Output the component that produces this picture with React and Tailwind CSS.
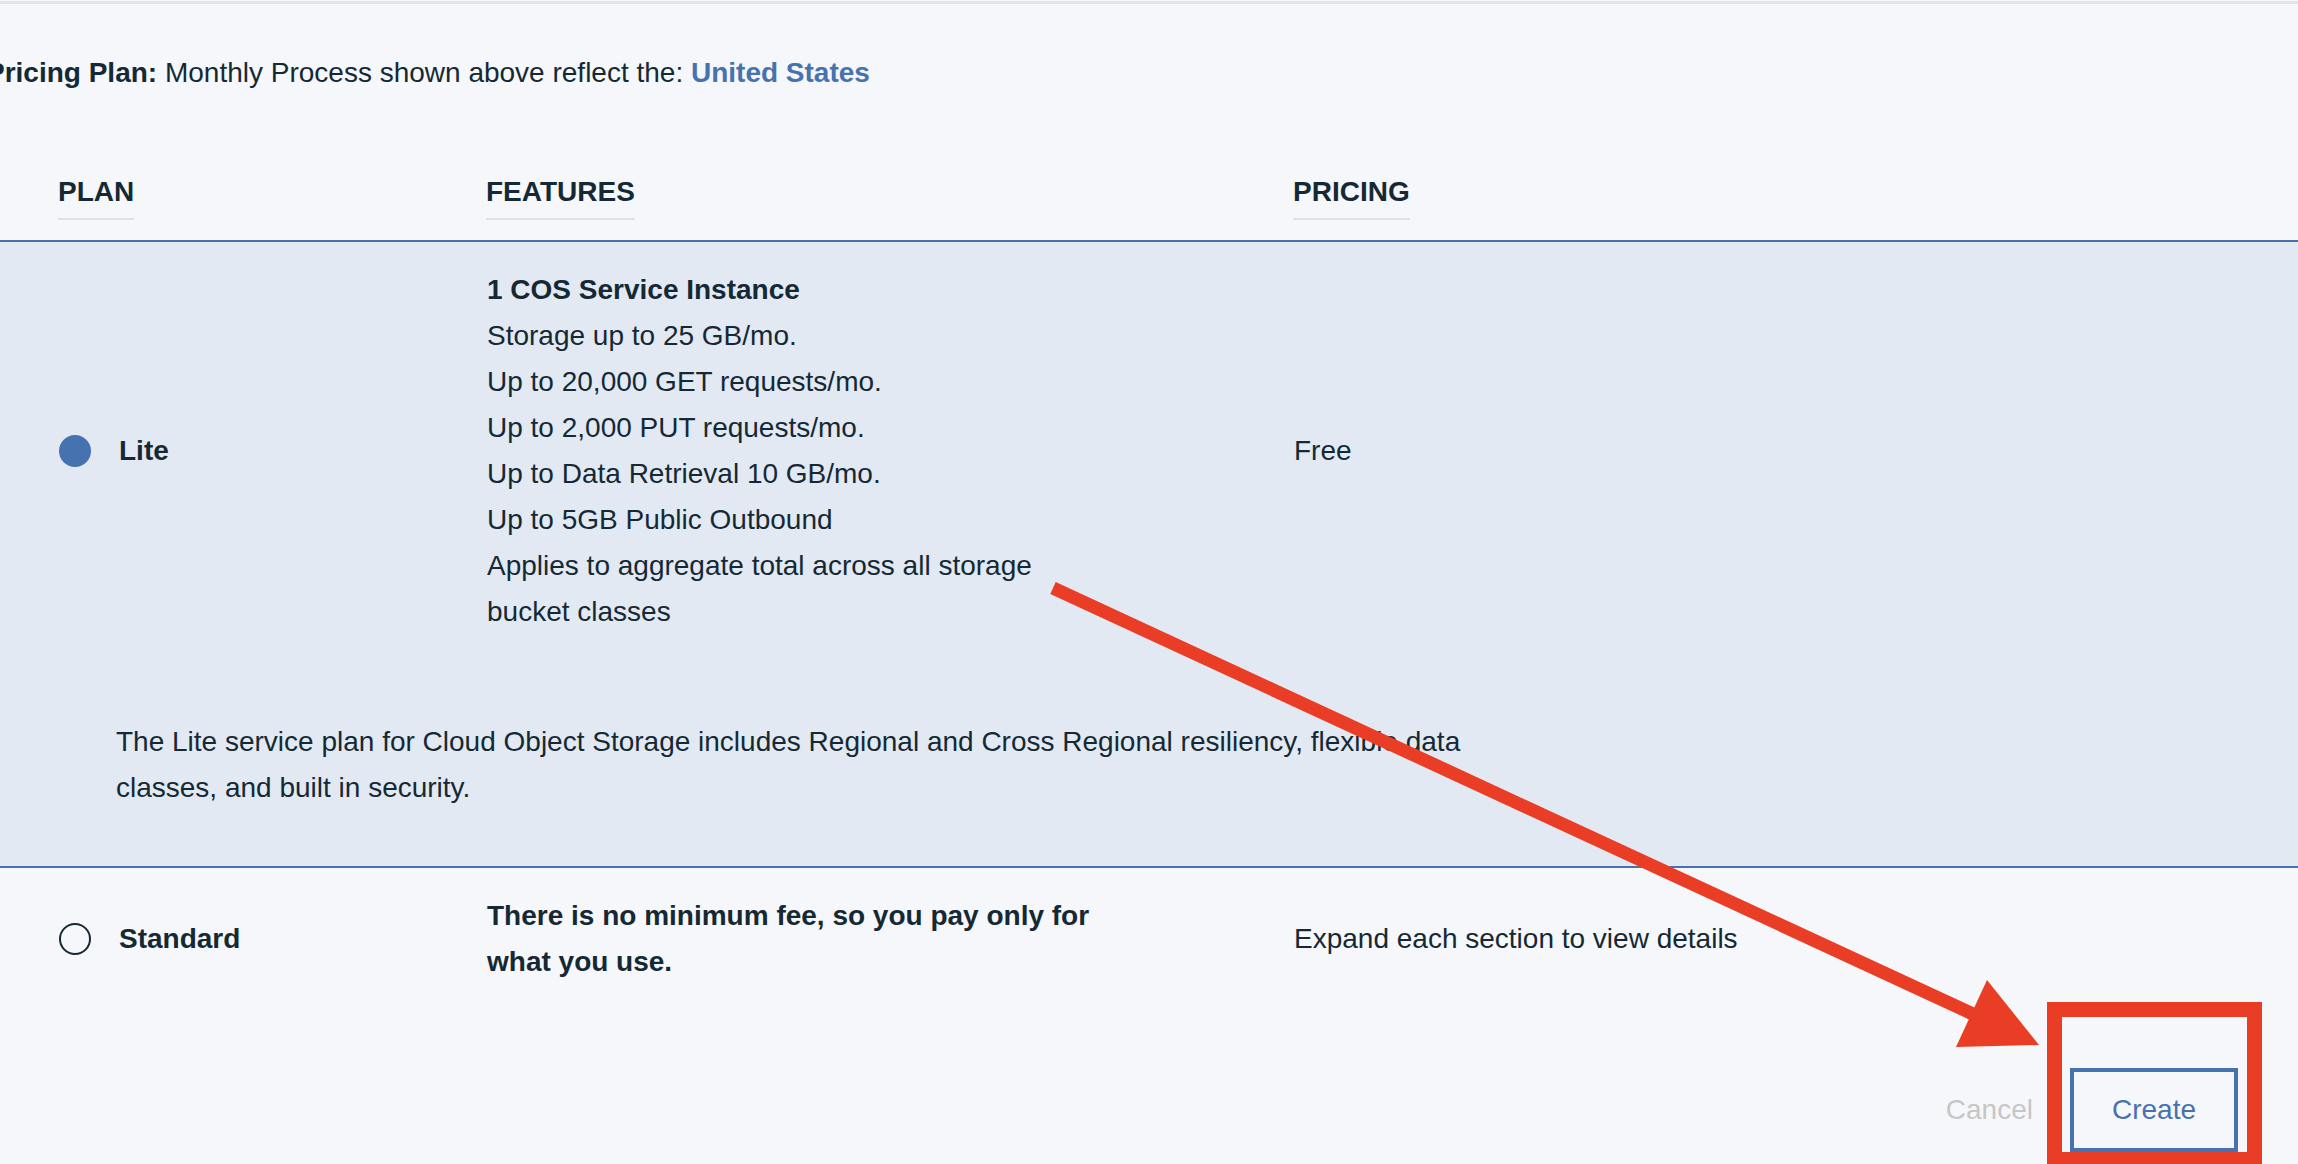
import { useState } from "react";

const features = [
  "Storage up to 25 GB/mo.",
  "Up to 20,000 GET requests/mo.",
  "Up to 2,000 PUT requests/mo.",
  "Up to Data Retrieval 10 GB/mo.",
  "Up to 5GB Public Outbound",
  "Applies to aggregate total across all storage bucket classes",
];

function Radio({ checked }) {
  return checked ? (
    <span className="block h-8 w-8 shrink-0 rounded-full bg-[#4672b0]" />
  ) : (
    <span className="block h-8 w-8 shrink-0 rounded-full border-2 border-[#152935]" />
  );
}

export default function App() {
  const [plan, setPlan] = useState("lite");

  return (
    <div className="relative min-h-screen overflow-hidden bg-[#f5f7fa] font-['Liberation_Sans',Arial,sans-serif] text-[#152935]">
      <div className="mt-[1px] h-[3px] bg-[#e0e3e7]" />

      <p className="-ml-[14px] mt-[51px] text-[28px] leading-[36px]">
        <span className="font-bold">Pricing Plan:</span> Monthly Process shown above reflect the:{" "}
        <span className="font-bold text-[#4672b0]">United States</span>
      </p>

      {/* cabecera de la tabla */}
      <div className="mt-[83px] grid grid-cols-[428px_807px_1fr] border-b-2 border-[#4672b0] pb-[20px] pl-[58px]">
        {["PLAN", "FEATURES", "PRICING"].map((h) => (
          <div key={h}>
            <span className="inline-block border-b-2 border-[#e0e0e0] pb-[8px] text-[28px] font-bold leading-[36px]">
              {h}
            </span>
          </div>
        ))}
      </div>

      {/* Lite */}
      <div
        onClick={() => setPlan("lite")}
        className={`border-b-2 border-[#4672b0] pb-[55px] pt-[25px] ${plan === "lite" ? "bg-[#e2e9f3]" : ""}`}
      >
        <div className="grid grid-cols-[428px_807px_1fr] items-center pl-[59px] text-[28px] leading-[46px]">
          <div className="flex items-center gap-[28px]">
            <Radio checked={plan === "lite"} />
            <span className="font-bold">Lite</span>
          </div>
          <div className="max-w-[615px]">
            <p className="font-bold">1 COS Service Instance</p>
            {features.map((f) => (
              <p key={f}>{f}</p>
            ))}
          </div>
          <div>Free</div>
        </div>
        <p className="ml-[116px] mt-[84px] max-w-[1380px] text-[28px] leading-[46px]">
          The Lite service plan for Cloud Object Storage includes Regional and Cross Regional resiliency, flexible data
          classes, and built in security.
        </p>
      </div>

      {/* Standard */}
      <div
        onClick={() => setPlan("standard")}
        className={`pb-[25px] pt-[25px] ${plan === "standard" ? "bg-[#e2e9f3]" : ""}`}
      >
        <div className="grid grid-cols-[428px_807px_1fr] items-center pl-[59px] text-[28px] leading-[46px]">
          <div className="flex items-center gap-[28px]">
            <Radio checked={plan === "standard"} />
            <span className="font-bold">Standard</span>
          </div>
          <p className="max-w-[615px] font-bold">There is no minimum fee, so you pay only for what you use.</p>
          <div>Expand each section to view details</div>
        </div>
      </div>

      <div className="flex items-center justify-end pr-[60px] pt-[58px]">
        <button className="mr-[37px] text-[28px] leading-[36px] text-[#c6c6c6]">Cancel</button>
        <button className="h-[84px] w-[168px] border-4 border-[#4672b0] text-[28px] text-[#4672b0]">Create</button>
      </div>

      {/* anotación roja */}
      <svg className="pointer-events-none absolute left-0 top-0" width="2298" height="1164">
        <line x1="1053" y1="588" x2="1975" y2="1015" stroke="#ea3d26" strokeWidth="13" />
        <polygon points="2039,1045 1987,980 1956,1047" fill="#ea3d26" />
        <rect x="2054.5" y="1009.5" width="200" height="150" fill="none" stroke="#ea3d26" strokeWidth="15" />
      </svg>
    </div>
  );
}
